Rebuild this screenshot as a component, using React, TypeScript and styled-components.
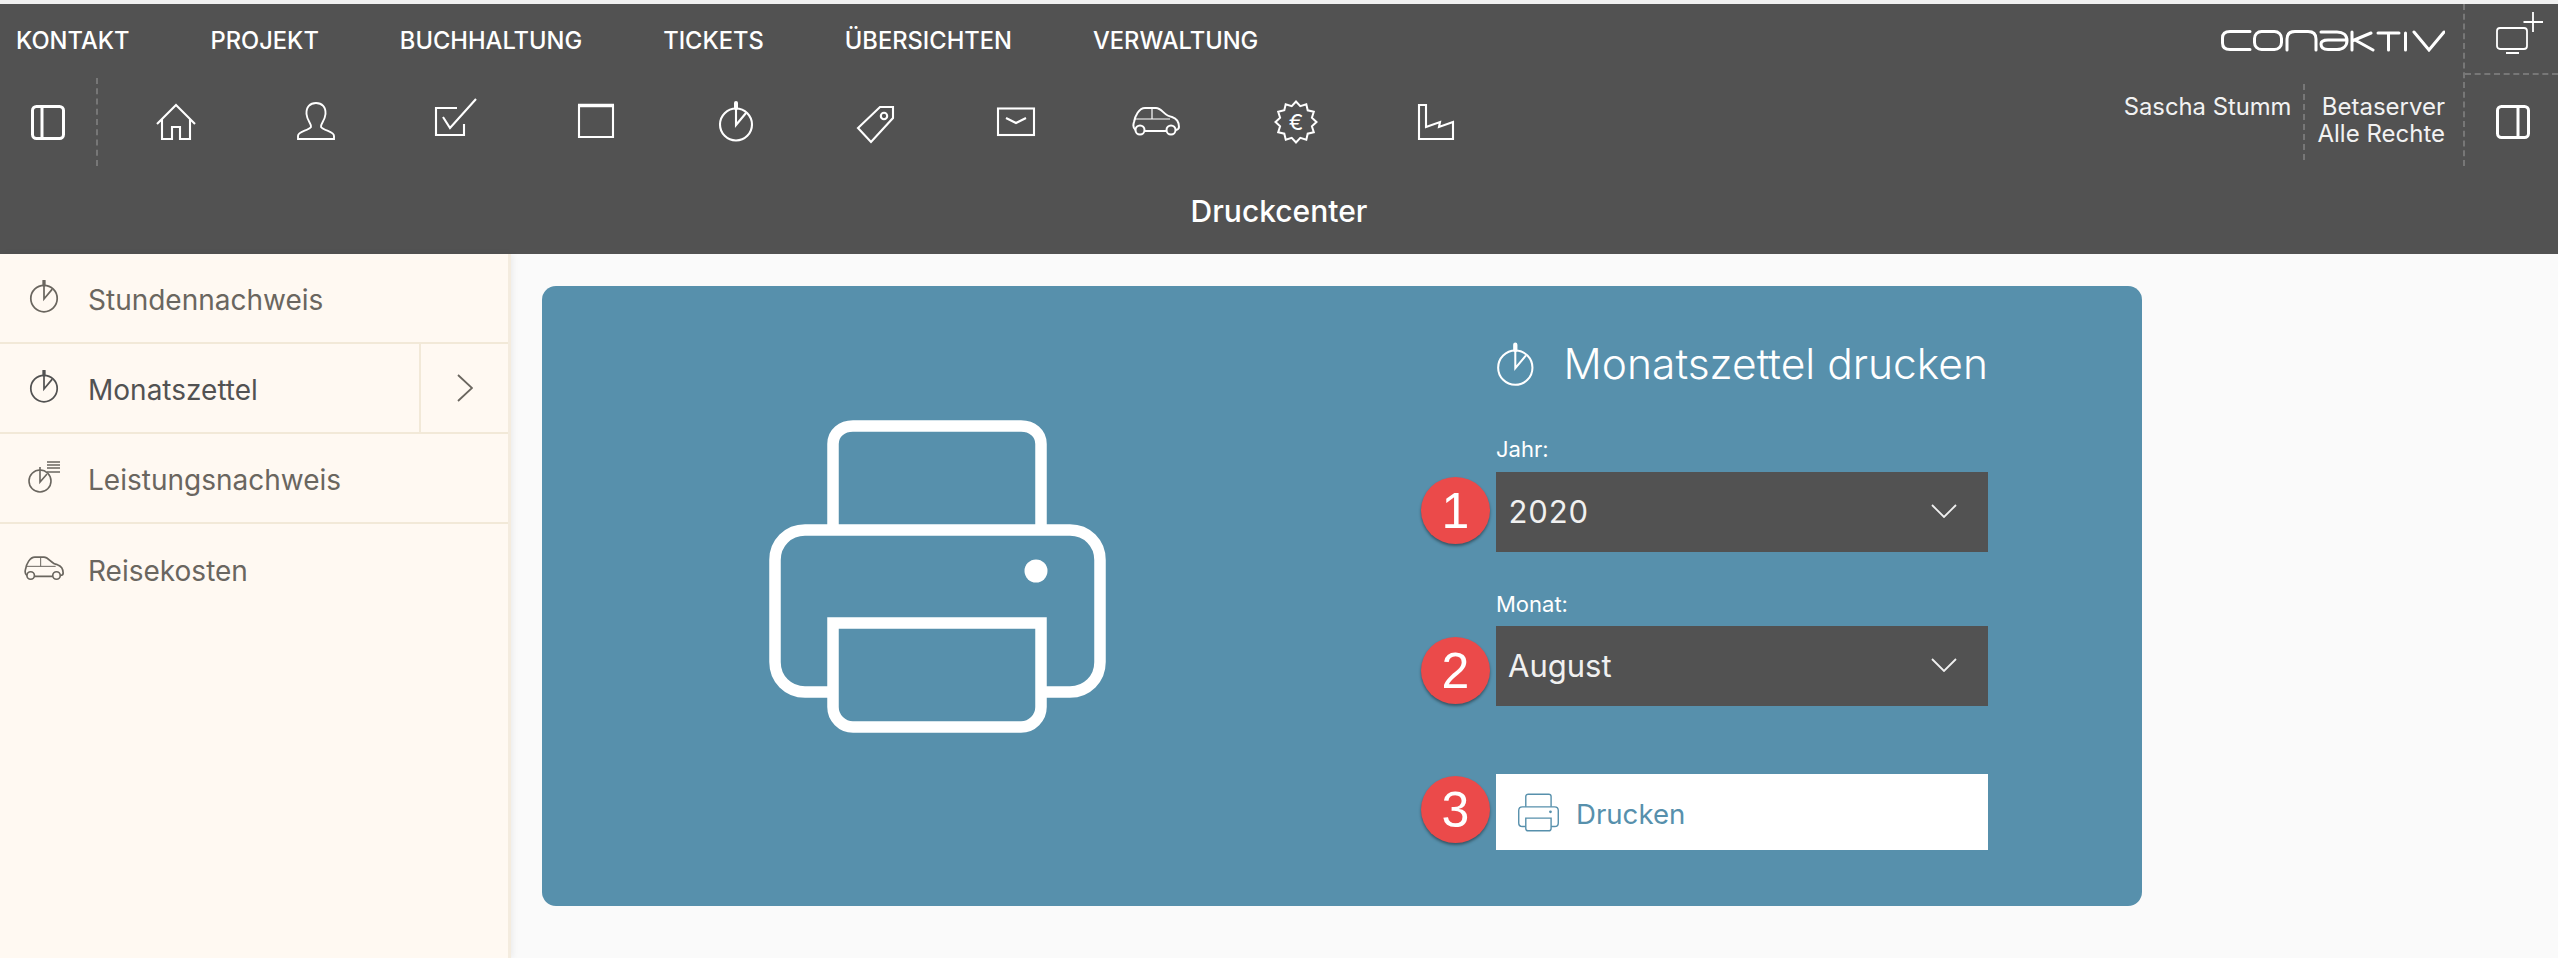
import React from "react";
import styled, { createGlobalStyle } from "styled-components";

const dark = "#525252";
const blue = "#5790ac";
const cream = "#fff9f2";
const line = "#f2e9d8";

const Global = createGlobalStyle`
  html, body { margin: 0; padding: 0; background: #fafafa; }
  body { font-family: Inter, "Liberation Sans", sans-serif; }
  svg { display: block; }
`;

const Page = styled.div`
  display: flex;
  flex-direction: column;
  height: 958px;
  overflow: hidden;
  border-top: 4px solid #f0f0f0;
  box-sizing: border-box;
`;
const Header = styled.header`
  height: 250px;
  flex: none;
  background: ${dark};
  color: #fff;
  display: flex;
  flex-direction: column;
`;
const HeaderTop = styled.div`
  display: flex;
  height: 162px;
`;
const HeaderLeft = styled.div`
  display: flex;
  flex-direction: column;
  flex: 1;
`;
const Nav = styled.nav`
  display: flex;
  align-items: center;
  gap: 81px;
  height: 74px;
  padding-left: 16px;
`;
const NavItem = styled.span`
  font-size: 23.7px;
  font-weight: 500;
  line-height: 26px;
`;
const IconBar = styled.div`
  display: flex;
  height: 88px;
`;
const PanelCell = styled.div`
  width: 98px;
  box-sizing: border-box;
  padding-left: 31px;
  display: flex;
  align-items: center;
  border-right: 2px dashed #777;
  margin-right: 8px;
`;
const IconSlot = styled.div`
  width: 140px;
  display: flex;
  align-items: center;
  justify-content: center;
`;
const HeaderRight = styled.div`
  display: flex;
  flex-direction: column;
  align-items: flex-end;
`;
const LogoRow = styled.div`
  height: 74px;
  display: flex;
  align-items: flex-start;
  padding: 26px 18px 0 0;
  box-sizing: border-box;
`;
const UserRow = styled.div`
  display: flex;
  height: 76px;
  margin-top: 6px;
`;
const UserName = styled.div`
  font-size: 23.8px;
  line-height: 27px;
  padding: 9px 12px 0 0;
  color: #f2f2f2;
`;
const ServerInfo = styled.div`
  border-left: 2px dashed #777;
  font-size: 24px;
  line-height: 27px;
  padding: 9px 18px 0 12px;
  text-align: right;
  color: #f2f2f2;
`;
const Utility = styled.div`
  width: 95px;
  flex: none;
  border-left: 2px dashed #777;
  box-sizing: border-box;
  display: flex;
  flex-direction: column;
`;
const MonitorCell = styled.div`
  height: 71px;
  box-sizing: border-box;
  border-bottom: 2px dashed #777;
  padding: 7px 0 0 30px;
`;
const RightPanelCell = styled.div`
  flex: 1;
  padding: 30px 0 0 31px;
`;
const Title = styled.div`
  flex: 1;
  display: flex;
  align-items: center;
  justify-content: center;
  font-size: 30px;
  font-weight: 500;
  padding-top: 2px;
`;

const Body = styled.div`
  flex: 1;
  display: flex;
  min-height: 0;
`;
const Sidebar = styled.aside`
  width: 511px;
  box-sizing: border-box;
  flex: none;
  background: ${cream};
  border-right: 3px solid #f4ecdf;
  box-shadow: 2px 0 6px rgba(0, 0, 0, 0.06);
`;
const Row = styled.div<{ $last?: boolean; $active?: boolean }>`
  height: 90px;
  box-sizing: border-box;
  display: flex;
  align-items: center;
  border-bottom: ${(p) => (p.$last ? "none" : `2px solid ${line}`)};
  color: ${(p) => (p.$active ? dark : "#6a665f")};
`;
const RowIcon = styled.div`
  width: 88px;
  flex: none;
  display: flex;
  justify-content: center;
  padding-bottom: 3px;
  box-sizing: border-box;
`;
const RowLabel = styled.div`
  flex: 1;
  font-size: 28px;
  line-height: 32px;
  padding-top: 3px;
`;
const RowArrow = styled.div`
  width: 89px;
  height: 100%;
  flex: none;
  display: flex;
  align-items: center;
  justify-content: center;
  border-left: 2px solid ${line};
  box-sizing: border-box;
`;

const Main = styled.main`
  flex: 1;
  padding: 32px 0 0 31px;
`;
const Card = styled.section`
  width: 1600px;
  height: 620px;
  background: ${blue};
  border-radius: 14px;
  box-sizing: border-box;
  padding: 56px 154px 0 227px;
  display: flex;
  justify-content: space-between;
  color: #fff;
`;
const PrinterArt = styled.div`
  margin-top: 78px;
`;
const Form = styled.div`
  width: 492px;
  display: flex;
  flex-direction: column;
`;
const FormTitle = styled.div`
  display: flex;
  align-items: center;
  gap: 29px;
  height: 46px;
  font-size: 42.5px;
  font-weight: 300;
  white-space: nowrap;
`;
const FormTitleText = styled.span`
  margin-top: -4px;
`;
const Label = styled.div<{ $top: number; $gap: number }>`
  font-size: 22px;
  line-height: 30px;
  margin-top: ${(p) => p.$top}px;
  margin-bottom: ${(p) => p.$gap}px;
`;
const SelectBox = styled.div`
  position: relative;
  height: 80px;
  background: ${dark};
  display: flex;
  align-items: center;
  justify-content: space-between;
  padding: 0 31px 2px 12px;
  box-sizing: border-box;
  font-size: 31px;
  font-variant-numeric: tabular-nums;
  color: #f0f0f0;
`;
const PrintButton = styled.button`
  position: relative;
  height: 76px;
  margin-top: 68px;
  border: 0;
  padding: 0 0 0 22px;
  background: #fff;
  color: ${blue};
  display: flex;
  align-items: center;
  gap: 17px;
  font: 400 27.6px Inter, sans-serif;
`;
const ButtonText = styled.span`
  padding-top: 3px;
`;
const Badge = styled.span<{ $top: number }>`
  position: absolute;
  left: -75px;
  top: ${(p) => p.$top}px;
  width: 69px;
  height: 67px;
  border-radius: 50%;
  background: #eb4a4a;
  box-shadow: 0 2px 3px rgba(0, 0, 0, 0.4);
  color: #fff;
  display: flex;
  align-items: center;
  justify-content: center;
  font: 400 50px "Liberation Sans", Arial, sans-serif;
  font-variant-numeric: normal;
`;

type S = { w?: number; h?: number };

const G = ({ children, w = 48, h = 48, vb = "0 0 48 48", sw = 2.1 }: S & { children: React.ReactNode; vb?: string; sw?: number }) => (
  <svg width={w} height={h} viewBox={vb} fill="none" stroke="currentColor" strokeWidth={sw} strokeLinejoin="miter">
    {children}
  </svg>
);

const PanelLeft = () => (
  <svg width="34" height="35" viewBox="0 0 34 35" fill="none" stroke="#fff" strokeWidth="3">
    <rect x="1.500" y="1.500" width="31" height="32" rx="4" />
    <path d="M11 2V33" />
  </svg>
);
const PanelRight = () => (
  <svg width="34" height="34" viewBox="0 0 34 34" fill="none" stroke="#fff" strokeWidth="3">
    <rect x="1.500" y="1.500" width="31" height="31" rx="4" />
    <path d="M22 2V32" />
  </svg>
);
const Home = () => (
  <G><path d="M5 26 24 7 43 26M10 21V41H20V29H28V41H38V21" /></G>
);
const Person = () => (
  <G sw={1.9}><path d="M6 41V38C6 33 16 33 19 29C20 26 15 23 14.500 16C14 9 18 5 24 5C30 5 34 9 33.500 16C33 23 28 26 29 29C32 33 42 33 42 38V41Z" /></G>
);
const Check = () => (
  <G><path d="M25 10H4V37H32V26M11 19 18 30 44 1" /></G>
);
const Square = () => (
  <G><path d="M7 8H41V39H7Z" /><path d="M6 7.500H42" strokeWidth="3.500" /></G>
);
const Timer = ({ w = 34, h = 38, sw = 2 }: S & { sw?: number }) => (
  <G w={w} h={h} vb="6 4 36 40" sw={sw}>
    <circle cx="24" cy="26.500" r="16" />
    <path d="M24 8V27L34 15" />
    <path d="M24 5V10" strokeWidth="4" strokeLinecap="round" />
  </G>
);
const TimerSlot = () => (
  <G><circle cx="24" cy="26.500" r="16" /><path d="M24 8V27L34 15" /><path d="M24 5V10" strokeWidth="4" strokeLinecap="round" /></G>
);
const Tag = () => (
  <G><path d="M41 9H28L6 30 19 44 41 20Z" /><circle cx="32" cy="18" r="3.200" /></G>
);
const Mail = () => (
  <G><rect x="6" y="10.500" width="36" height="26.500" /><path d="M14 20 24 25 34 20" /></G>
);
const Car = ({ w = 48, h = 48, sw = 2 }: S & { sw?: number }) => (
  <G w={w} h={h} vb={w === 48 ? "0 0 48 48" : "0 8 48 30"} sw={sw}>
    <circle cx="8" cy="32" r="4.500" />
    <circle cx="39" cy="32" r="4.500" />
    <path d="M12.500 33H34.500M3.500 32C1 30 1 27 2 24 3 18 7 10 13 10H24C30 10 32 18 40 19 46 21 47 26 47 29 47 31 45 32 43.500 32" />
    <path d="M3 21H38M20 10V21" strokeWidth={sw * 0.6} />
  </G>
);
const starPoints = Array.from({ length: 24 }, (_, i) => {
  const r = i % 2 === 0 ? 20.5 : 16.5;
  const a = (i * Math.PI) / 12;
  return `${(24 + r * Math.cos(a)).toFixed(1)},${(24 + r * Math.sin(a)).toFixed(1)}`;
}).join(" ");
const EuroText = styled.text`
  font: 400 22px Inter, sans-serif;
  fill: currentColor;
  stroke: none;
`;
const Euro = () => (
  <G sw={2}>
    <polygon points={starPoints} />
    <EuroText x="24" y="32" textAnchor="middle">€</EuroText>
  </G>
);
const Factory = () => (
  <G><path d="M7 7H14V29L28 24 27 29 41 24V41H7Z" /></G>
);
const PrinterGlyph = ({ w, h }: { w: number; h: number }) => (
  <svg width={w} height={h} viewBox="0 0 337 313" fill="none" stroke="currentColor" strokeWidth="11.500">
    <path d="M64 110V24C64 13 73 6 84 6H252C263 6 272 13 272 24V110" />
    <path d="M64 272H36C19 272 6 259 6 242V140C6 123 19 110 36 110H301C318 110 331 123 331 140V242C331 259 318 272 301 272H272" />
    <path d="M64 203H272V287C272 298 263 307 252 307H84C73 307 64 298 64 287Z" />
    <circle cx="267" cy="151" r="11.500" fill="currentColor" stroke="none" />
  </svg>
);
const Logo = () => (
  <svg width="224" height="22" viewBox="0 0 224 22" fill="none" stroke="#fff" strokeWidth="3" strokeLinecap="round">
    <path d="M29 1.500H9C4 1.500 1.500 4 1.500 8V13C1.500 17 4 19.500 9 19.500H29" />
    <rect x="33.500" y="1.500" width="27" height="18" rx="7" />
    <path d="M66 20V9C66 4 69 1.500 74 1.500H87C92 1.500 95 4 95 9V20" />
    <path d="M100 2H116C122 2 126 5 126 10.500 126 16 122 19.500 116 19.500H107C102 19.500 100 17 100 14 100 11.500 102 10 107 10H125" />
    <path d="M131 2V20M131 11 150 3M134 10 152 20" />
    <path d="M157 3H178M167.500 3V20" />
    <path d="M184.500 3V20" />
    <path d="M193 2 208 20 223 2" />
  </svg>
);
const Monitor = () => (
  <svg width="50" height="46" viewBox="0 0 50 46" fill="none" stroke="#fff" strokeWidth="1.800">
    <rect x="2" y="17" width="30" height="21" rx="3" />
    <path d="M11 42H24M38 1V21M28.500 11H48" />
  </svg>
);
const RowChevron = () => (
  <svg width="16" height="28" viewBox="0 0 16 28" fill="none" stroke="#6a665f" strokeWidth="1.800"><path d="M1 1 15 14 1 27" /></svg>
);
const SelectChevron = () => (
  <svg width="26" height="14" viewBox="0 0 26 14" fill="none" stroke="#f0f0f0" strokeWidth="1.800"><path d="M1 1 13 13 25 1" /></svg>
);
const ReportTimer = () => (
  <svg width="34" height="34" viewBox="0 0 34 34" fill="none" stroke="currentColor" strokeWidth="1.600">
    <circle cx="13" cy="21" r="11" />
    <path d="M13 7V22L20 14M20 2H33M20 5H33M20 8H33M20 12H33" />
  </svg>
);

const menu = ["KONTAKT", "PROJEKT", "BUCHHALTUNG", "TICKETS", "ÜBERSICHTEN", "VERWALTUNG"];
const tools = [Home, Person, Check, Square, TimerSlot, Tag, Mail, Car, Euro, Factory];

export default function App() {
  return (
    <Page>
      <Global />
      <Header>
        <HeaderTop>
          <HeaderLeft>
            <Nav>{menu.map((m) => <NavItem key={m}>{m}</NavItem>)}</Nav>
            <IconBar>
              <PanelCell><PanelLeft /></PanelCell>
              {tools.map((T, i) => <IconSlot key={i}><T /></IconSlot>)}
            </IconBar>
          </HeaderLeft>
          <HeaderRight>
            <LogoRow><Logo /></LogoRow>
            <UserRow>
              <UserName>Sascha Stumm</UserName>
              <ServerInfo>Betaserver<br />Alle Rechte</ServerInfo>
            </UserRow>
          </HeaderRight>
          <Utility>
            <MonitorCell><Monitor /></MonitorCell>
            <RightPanelCell><PanelRight /></RightPanelCell>
          </Utility>
        </HeaderTop>
        <Title>Druckcenter</Title>
      </Header>
      <Body>
        <Sidebar>
          <Row>
            <RowIcon><Timer w={30} h={33} sw={2.1} /></RowIcon>
            <RowLabel>Stundennachweis</RowLabel>
          </Row>
          <Row $active>
            <RowIcon><Timer w={30} h={33} sw={2.1} /></RowIcon>
            <RowLabel>Monatszettel</RowLabel>
            <RowArrow><RowChevron /></RowArrow>
          </Row>
          <Row>
            <RowIcon><ReportTimer /></RowIcon>
            <RowLabel>Leistungsnachweis</RowLabel>
          </Row>
          <Row $last>
            <RowIcon><Car w={40} h={26} sw={2} /></RowIcon>
            <RowLabel>Reisekosten</RowLabel>
          </Row>
        </Sidebar>
        <Main>
          <Card>
            <PrinterArt><PrinterGlyph w={337} h={313} /></PrinterArt>
            <Form>
              <FormTitle><Timer w={41} h={46} sw={1.9} /><FormTitleText>Monatszettel drucken</FormTitleText></FormTitle>
              <Label $top={46} $gap={8}>Jahr:</Label>
              <SelectBox>
                <Badge $top={5}>1</Badge>
                2020
                <SelectChevron />
              </SelectBox>
              <Label $top={37} $gap={7}>Monat:</Label>
              <SelectBox>
                <Badge $top={11}>2</Badge>
                August
                <SelectChevron />
              </SelectBox>
              <PrintButton>
                <Badge $top={2}>3</Badge>
                <PrinterGlyph w={41} h={39} />
                <ButtonText>Drucken</ButtonText>
              </PrintButton>
            </Form>
          </Card>
        </Main>
      </Body>
    </Page>
  );
}
